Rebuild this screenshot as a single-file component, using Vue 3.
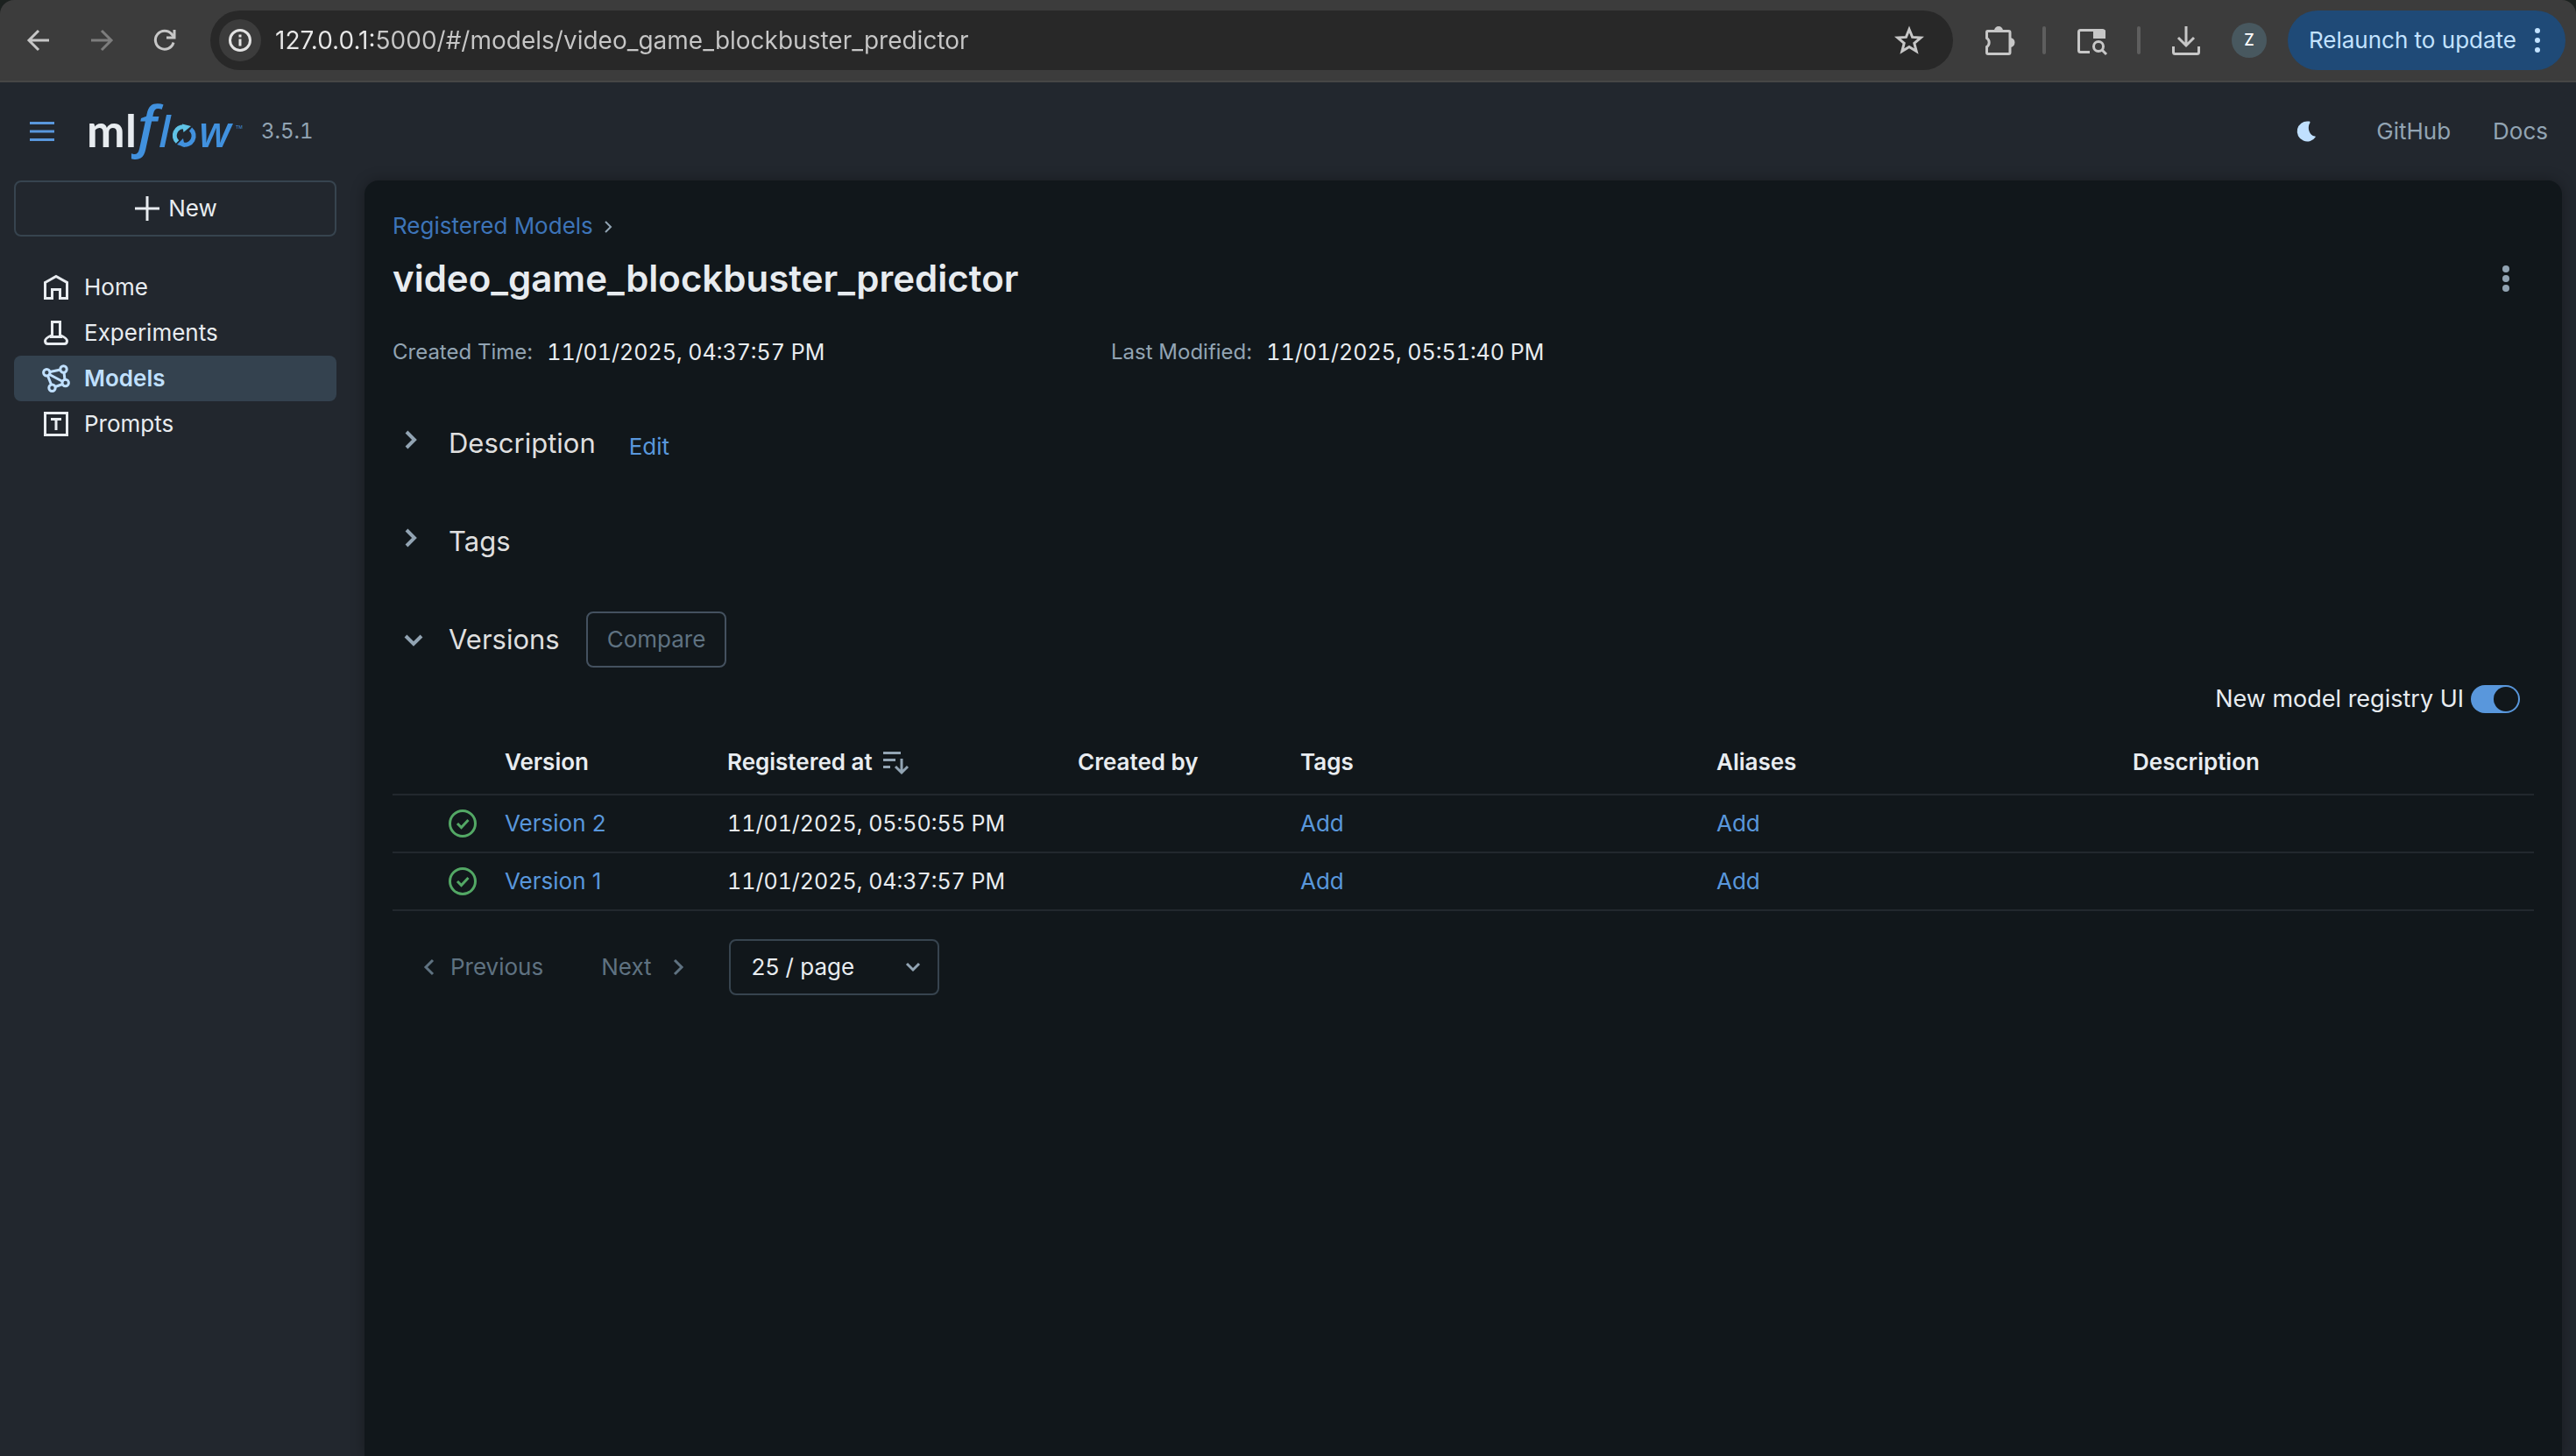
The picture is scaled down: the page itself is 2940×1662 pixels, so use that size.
<script setup>
import { ref } from 'vue'

const url = ref('127.0.0.1:5000/#/models/video_game_blockbuster_predictor')
const newRegistry = ref(true)
const pageSize = ref('25')

const nav = [
  { id: 'home', label: 'Home' },
  { id: 'experiments', label: 'Experiments' },
  { id: 'models', label: 'Models', active: true },
  { id: 'prompts', label: 'Prompts' },
]

const versions = [
  { name: 'Version 2', registered: '11/01/2025, 05:50:55 PM' },
  { name: 'Version 1', registered: '11/01/2025, 04:37:57 PM' },
]
</script>

<template>
  <div class="window">
    <div class="toolbar">
      <button class="tool nav-tool" aria-label="Back">
        <svg width="32" height="32" viewBox="0 0 32 32"><path d="M28 16H6M16 5 5 16l11 11" /></svg>
      </button>
      <button class="tool nav-tool dim" aria-label="Forward">
        <svg width="32" height="32" viewBox="0 0 32 32"><path d="M4 16h22M16 5l11 11-11 11" /></svg>
      </button>
      <button class="tool nav-tool" aria-label="Reload">
        <svg width="32" height="32" viewBox="0 0 32 32"><path d="M26 18.500A10.500 10.500 0 1 1 24 9l2.500 3" /><path d="M27 4v9h-9" /></svg>
      </button>
      <div class="address">
        <button class="site-info" aria-label="Site information">
          <svg width="32" height="32" viewBox="0 0 32 32"><circle cx="16" cy="16" r="11.500" /><path d="M16 14.500v8M16 9.500v3" /></svg>
        </button>
        <input v-model="url" class="url" type="text" aria-label="Address" />
        <button class="tool" aria-label="Bookmark">
          <svg width="36" height="36" viewBox="0 0 36 36"><path d="m18 5.500 3.600 8.900 9.600.7-7.400 6.200 2.400 9.300L18 25.500l-8.200 5.100 2.400-9.300-7.400-6.200 9.600-.7z" /></svg>
        </button>
      </div>
      <button class="tool puzzle" aria-label="Extensions">
        <svg width="40" height="40" viewBox="0 0 40 40"><path d="M6.500 10.500q0-1 1-1h24q1.500 0 1.500 1.500v23q0 1.500-1.500 1.500h-23.500q-1.500 0-1.500-1.500v-6.500a6 6 0 0 0 0-10z" /><path class="solid" d="M15 9a5 5 0 0 1 10 0zM33 17a5 5 0 0 1 0 11z" /></svg>
      </button>
      <span class="rule"></span>
      <button class="tool" aria-label="Search tabs">
        <svg width="40" height="40" viewBox="0 0 40 40"><path d="M18 33.500H7.500q-2 0-2-2v-21q0-2 2-2h25q2 0 2 2V17" /><path class="solid" d="M22 8.500h14v9.500H22z" /><circle cx="28" cy="27" r="5.500" /><path d="m32 31 5 5" /></svg>
      </button>
      <span class="rule"></span>
      <button class="tool" aria-label="Downloads">
        <svg width="40" height="40" viewBox="0 0 40 40"><path d="M20 4v22M11 17l9 9 9-9M5.500 27v6.500q0 2 2 2h25q2 0 2-2V27" /></svg>
      </button>
      <button class="avatar" aria-label="Profile">Z</button>
      <button class="relaunch">
        Relaunch to update
        <svg width="8" height="32" viewBox="0 0 8 32"><circle cx="4" cy="5" r="3" /><circle cx="4" cy="16" r="3" /><circle cx="4" cy="27" r="3" /></svg>
      </button>
    </div>

    <header class="header">
      <button class="menu" aria-label="Toggle menu">
        <svg width="32" height="32" viewBox="0 0 32 32"><path d="M2 6.500h28M2 16h28M2 25.500h28" /></svg>
      </button>
      <a class="logo" href="#/" aria-label="mlflow">
        <svg width="200" height="80" viewBox="0 0 200 80">
          <text class="ml" x="7 51" y="58">ml</text>
          <text class="flow big" x="65" y="57">f</text>
          <text class="flow" x="89" y="58">l</text>
          <text class="flow" x="135" y="58">w</text>
          <path class="ring light" d="M110.500 52A10 10 0 0 1 118 34.700" />
          <path class="ring" d="M125.500 37.500A10 10 0 0 1 116 54.700" />
          <path class="tip light-tip" d="M116 31.500l10 2.500-8.500 7z" />
          <path class="tip" d="M119 58l-9-3 7-7z" />
          <text class="tm" x="177" y="37">TM</text>
        </svg>
      </a>
      <span class="release">3.5.1</span>
      <nav class="header-links">
        <button class="theme" aria-label="Dark mode">
          <svg width="32" height="32" viewBox="0 0 32 32"><path d="M18 4.500A11.500 11.500 0 1 0 27 22 3 3 0 0 0 26 21.500C20 21 16.500 12 20.500 6A2 2 0 0 0 20 4.500z" /></svg>
        </button>
        <a href="#github">GitHub</a>
        <a href="#docs">Docs</a>
      </nav>
    </header>

    <div class="body">
      <aside class="sidebar">
        <button class="new">
          <svg width="32" height="32" viewBox="0 0 32 32"><path d="M16 2v28M2 16h28" /></svg>
          New
        </button>
        <nav class="nav">
          <a v-for="item in nav" :key="item.id" :href="'#/' + item.id" :class="['nav-item', { active: item.active }]">
            <svg width="32" height="32" viewBox="0 0 32 32">
              <path v-if="item.id === 'home'" d="M3.500 10.500 16 3.500l12.500 7v18h-8V18.500h-9v10h-8z" />
              <path v-else-if="item.id === 'experiments'" d="M11.500 3.500h9v15q8 3.500 8 6.500 0 3.500-3 3.500h-19q-3 0-3-3.500 0-3 8-6.500zM9 20.500h14" />
              <g v-else-if="item.id === 'models'">
                <circle cx="5.300" cy="9.300" r="3.700" /><circle cx="24.500" cy="5.500" r="3.700" /><circle cx="26.700" cy="21" r="3.700" /><circle cx="11.500" cy="26.700" r="3.700" />
                <path d="M9 8.500l12-2.500M8.500 11.500l15 8M6.500 13l4 10M25 9l1 8.500M23.500 22.500l-8.500 3" />
              </g>
              <g v-else>
                <path d="M3.500 3.500h25v25h-25z" /><path d="M10 10.500h12M16 10v13" />
              </g>
            </svg>
            {{ item.label }}
          </a>
        </nav>
      </aside>

      <main class="main">
        <nav class="crumbs" aria-label="Breadcrumb">
          <a href="#/models">Registered Models</a>
          <svg width="16" height="16" viewBox="0 0 16 16"><path d="m4 3 6 6-6 6" /></svg>
        </nav>
        <div class="title-row">
          <h1>video_game_blockbuster_predictor</h1>
          <button class="kebab" aria-label="More actions">
            <svg width="32" height="32" viewBox="0 0 32 32"><circle cx="16" cy="5" r="4" /><circle cx="16" cy="16" r="4" /><circle cx="16" cy="27" r="4" /></svg>
          </button>
        </div>
        <dl class="meta">
          <div><dt>Created Time:</dt><dd>11/01/2025, 04:37:57 PM</dd></div>
          <div><dt>Last Modified:</dt><dd>11/01/2025, 05:51:40 PM</dd></div>
        </dl>

        <div class="sections">
          <section class="section">
            <button class="fold" aria-expanded="false" aria-label="Expand description">
              <svg class="closed" width="32" height="32" viewBox="0 0 32 32"><path d="m8 7 9 9-9 9" /></svg>
            </button>
            <h2>Description</h2>
            <a class="edit" href="#edit">Edit</a>
          </section>
          <section class="section">
            <button class="fold" aria-expanded="false" aria-label="Expand tags">
              <svg class="closed" width="32" height="32" viewBox="0 0 32 32"><path d="m8 7 9 9-9 9" /></svg>
            </button>
            <h2>Tags</h2>
          </section>
          <section class="section">
            <button class="fold" aria-expanded="true" aria-label="Collapse versions">
              <svg width="32" height="32" viewBox="0 0 32 32"><path d="m7 12 9 9 9-9" /></svg>
            </button>
            <h2>Versions</h2>
            <button class="compare" disabled>Compare</button>
          </section>
        </div>

        <label class="switch">
          New model registry UI
          <input v-model="newRegistry" type="checkbox" role="switch" />
        </label>

        <table class="versions">
          <colgroup>
            <col class="c-status" /><col class="c-version" /><col class="c-date" /><col class="c-by" /><col class="c-wide" /><col class="c-wide" /><col />
          </colgroup>
          <thead>
            <tr>
              <th aria-label="Status"></th>
              <th>Version</th>
              <th>
                <span class="sorted">Registered at
                  <svg width="32" height="32" viewBox="0 0 32 32"><path d="M2 5.500h20M2 13.500h14M2 21.500h8M23 12v16M16 21l7 7 7-7" /></svg>
                </span>
              </th>
              <th>Created by</th>
              <th>Tags</th>
              <th>Aliases</th>
              <th>Description</th>
            </tr>
          </thead>
          <tbody>
            <tr v-for="v in versions" :key="v.name">
              <td class="status">
                <svg width="32" height="32" viewBox="0 0 32 32"><circle cx="16" cy="16" r="14.500" /><path d="m10 16 4.500 4.500 8-8.500" /></svg>
              </td>
              <td><a href="#version">{{ v.name }}</a></td>
              <td class="num">{{ v.registered }}</td>
              <td></td>
              <td><button class="add">Add</button></td>
              <td><button class="add">Add</button></td>
              <td></td>
            </tr>
          </tbody>
        </table>

        <div class="pager">
          <button class="page prev" disabled>
            <svg width="32" height="32" viewBox="0 0 32 32"><path d="m20 8-8 8 8 8" /></svg>
            Previous
          </button>
          <button class="page next" disabled>
            Next
            <svg width="32" height="32" viewBox="0 0 32 32"><path d="m12 8 8 8-8 8" /></svg>
          </button>
          <div class="size">
            <select v-model="pageSize" aria-label="Page size">
              <option value="25">25 / page</option>
              <option value="50">50 / page</option>
            </select>
            <svg width="32" height="32" viewBox="0 0 32 32"><path d="m9 12 7 7 7-7" /></svg>
          </div>
        </div>
      </main>
    </div>
  </div>
</template>

<style>
html,
body {
  background: #22272e;
}
</style>

<style scoped>
.window {
  display: flex;
  flex-direction: column;
  min-height: 100vh;
  background: #22272e;
  color: #e8ecf0;
  font-family: Inter, "Liberation Sans", sans-serif;
  font-size: 26px;
  line-height: 40px;
}

* {
  box-sizing: border-box;
}

button,
input,
select {
  margin: 0;
  padding: 0;
  border: 0;
  background: none;
  color: inherit;
  font: inherit;
}

a {
  color: #5997dc;
  text-decoration: none;
}

svg {
  display: block;
  flex: none;
  fill: none;
  stroke: currentColor;
  stroke-width: 3;
}

/* Browser toolbar */
.toolbar {
  display: flex;
  align-items: center;
  height: 94px;
  padding: 0 12px 0 28px;
  border-bottom: 2px solid #464646;
  border-radius: 16px 16px 0 0;
  background: #3c3c3c;
  box-shadow: 0 -20px 0 20px #1c211f;
  clip-path: inset(0);
  color: #c7c7c7;
}

.tool {
  display: flex;
}

.nav-tool {
  margin-right: 40px;
}

.dim {
  color: #7d7d7d;
}

.address {
  display: flex;
  flex: 1;
  align-items: center;
  height: 68px;
  margin-right: 32px;
  margin-left: -4px;
  padding: 0 32px 0 10px;
  border-radius: 34px;
  background: #282828;
}

.site-info {
  display: flex;
  align-items: center;
  justify-content: center;
  width: 48px;
  height: 48px;
  border-radius: 50%;
  background: #3c3c3c;
  color: #e3e3e3;
}

.url {
  flex: 1;
  height: 48px;
  margin-left: 16px;
  outline: 0;
  background: linear-gradient(90deg, #e8e8e8 114px, #c7c7c7 114px);
  background-clip: text;
  color: transparent;
  font-size: 28px;
}

.puzzle {
  margin-right: 30px;
}

.solid {
  fill: currentColor;
  stroke: none;
}

.rule {
  width: 4px;
  height: 32px;
  margin-right: 32px;
  border-radius: 2px;
  background: #5e5e5e;
}

.rule + .tool {
  margin-right: 32px;
}

.avatar {
  width: 40px;
  height: 40px;
  border-radius: 50%;
  background: #48585f;
  color: #fff;
  font-size: 18px;
  font-weight: 500;
  line-height: 40px;
}

.relaunch {
  display: flex;
  align-items: center;
  gap: 20px;
  height: 68px;
  margin-left: 24px;
  padding: 0 28px 0 24px;
  border-radius: 34px;
  background: #1f4a77;
  color: #c2e2ff;
}

.relaunch svg {
  fill: currentColor;
  stroke: none;
}

/* Application header */
.header {
  display: flex;
  align-items: center;
  height: 112px;
  padding: 0 32px;
}

.menu {
  color: #5997dc;
}

.logo {
  margin-left: 28px;
}

.logo svg {
  overflow: visible;
}

.logo text {
  stroke: none;
}

.ml {
  fill: #e8ecf0;
  font-family: Lato, sans-serif;
  font-size: 52px;
  font-weight: 700;
}

.flow {
  fill: #4191de;
  font-family: "Open Sans", sans-serif;
  font-size: 49px;
  font-style: italic;
  font-weight: 600;
}

.big {
  font-size: 64px;
}

.tm {
  fill: #4191de;
  font-size: 5px;
}

.ring {
  stroke: #4191de;
  stroke-width: 5;
}

.light {
  stroke: #5fc3e6;
}

.tip {
  fill: #4191de;
  stroke: none;
}

.light-tip {
  fill: #5fc3e6;
}

.release {
  margin-left: 6px;
  color: #92a4b3;
  font-size: 24px;
  font-variant-numeric: tabular-nums;
}

.header-links {
  display: flex;
  align-items: center;
  gap: 48px;
  margin-left: auto;
}

.header-links a {
  color: #92a4b3;
}

.theme {
  margin-right: 16px;
  color: #c0e0ff;
}

.theme svg {
  fill: currentColor;
  stroke: none;
}

/* Sidebar */
.body {
  display: flex;
  flex: 1;
  padding-right: 16px;
}

.sidebar {
  flex: none;
  width: 416px;
  padding: 0 32px 0 16px;
}

.new {
  display: flex;
  align-items: center;
  justify-content: center;
  gap: 8px;
  width: 100%;
  height: 64px;
  border: 2px solid #37444f;
  border-radius: 8px;
}

.nav {
  display: flex;
  flex-direction: column;
  margin-top: 32px;
}

.nav-item {
  display: flex;
  align-items: center;
  gap: 16px;
  height: 52px;
  padding: 0 32px;
  border-radius: 8px;
  color: #e8ecf0;
}

.active {
  background: #34424f;
  color: #c0e0ff;
  font-weight: 600;
}

/* Main panel */
.main {
  flex: 1;
  min-width: 0;
  padding: 32px;
  border-radius: 16px 16px 0 0;
  background: #11171b;
  box-shadow: 0 0 16px rgba(0, 0, 0, 0.3);
}

.crumbs {
  display: flex;
  align-items: center;
  gap: 10px;
  color: #92a4b3;
}

.crumbs a {
  color: #3d74b8;
}

.crumbs svg {
  stroke-width: 2;
}

.title-row {
  display: flex;
  align-items: center;
  justify-content: space-between;
  height: 64px;
  margin-top: 8px;
}

h1 {
  margin: 0;
  font-size: 42px;
  font-weight: 600;
}

.kebab {
  display: flex;
  justify-content: center;
  width: 64px;
  color: #92a4b3;
}

.kebab svg {
  fill: currentColor;
  stroke: none;
}

.meta {
  display: grid;
  grid-template-columns: 820px 1fr;
  margin: 32px 0 52px;
}

.meta div {
  display: flex;
  align-items: center;
  gap: 16px;
}

.meta dt {
  color: #92a4b3;
  font-size: 24px;
}

.meta dd {
  margin: 0;
}

.meta dd,
.num {
  font-size: 25px;
  font-variant-numeric: tabular-nums;
}

.sections {
  display: flex;
  flex-direction: column;
  gap: 48px;
}

.section {
  display: flex;
  align-items: center;
  height: 64px;
  padding-left: 8px;
}

.fold {
  margin-right: 24px;
  color: #92a4b3;
}

.fold svg {
  stroke-width: 4;
}

.fold .closed {
  margin-bottom: 8px;
}

h2 {
  margin: 0;
  color: #dfdfdf;
  font-size: 31px;
  font-weight: 400;
}

.edit {
  margin-left: 38px;
  padding-top: 8px;
}

.compare {
  height: 64px;
  margin-left: 30px;
  padding: 0 22px;
  border: 2px solid #44515f;
  border-radius: 8px;
  color: #5f7281;
}

.switch {
  display: flex;
  align-items: center;
  justify-content: flex-end;
  gap: 8px;
  height: 32px;
  margin: 20px 16px 0 0;
  font-size: 27px;
}

.switch input {
  display: flex;
  width: 56px;
  height: 32px;
  padding: 2px;
  border-radius: 16px;
  appearance: none;
  background: #44515f;
}

.switch input::before {
  width: 28px;
  height: 28px;
  border-radius: 50%;
  background: #11171b;
  content: "";
}

.switch input:checked {
  justify-content: flex-end;
  background: #5997dc;
}

.versions {
  width: 100%;
  margin-top: 20px;
  border-spacing: 0;
  table-layout: fixed;
}

.c-status {
  width: 128px;
}

.c-version,
.c-by {
  width: 254px;
}

.c-date {
  width: 400px;
}

.c-wide {
  width: 475px;
}

th,
td {
  height: 66px;
  padding: 0;
  border-bottom: 2px solid #22282e;
  text-align: left;
}

th {
  height: 74px;
  font-weight: 600;
}

.sorted {
  display: flex;
  align-items: center;
  gap: 10px;
}

.sorted svg {
  color: #92a4b3;
}

.status {
  padding-left: 64px;
  color: #53a865;
}

.add {
  color: #5997dc;
}

.pager {
  display: flex;
  align-items: center;
  height: 64px;
  margin-top: 32px;
  padding-left: 26px;
}

.page {
  display: flex;
  align-items: center;
  gap: 8px;
  color: #5f7281;
}

.next {
  gap: 14px;
  margin-left: 66px;
}

.size {
  display: flex;
  position: relative;
  align-items: center;
  margin-left: 42px;
}

.size select {
  width: 240px;
  height: 64px;
  padding: 0 24px;
  border: 2px solid #37444f;
  border-radius: 8px;
  appearance: none;
}

.size svg {
  position: absolute;
  right: 14px;
  color: #92a4b3;
  pointer-events: none;
}
</style>
